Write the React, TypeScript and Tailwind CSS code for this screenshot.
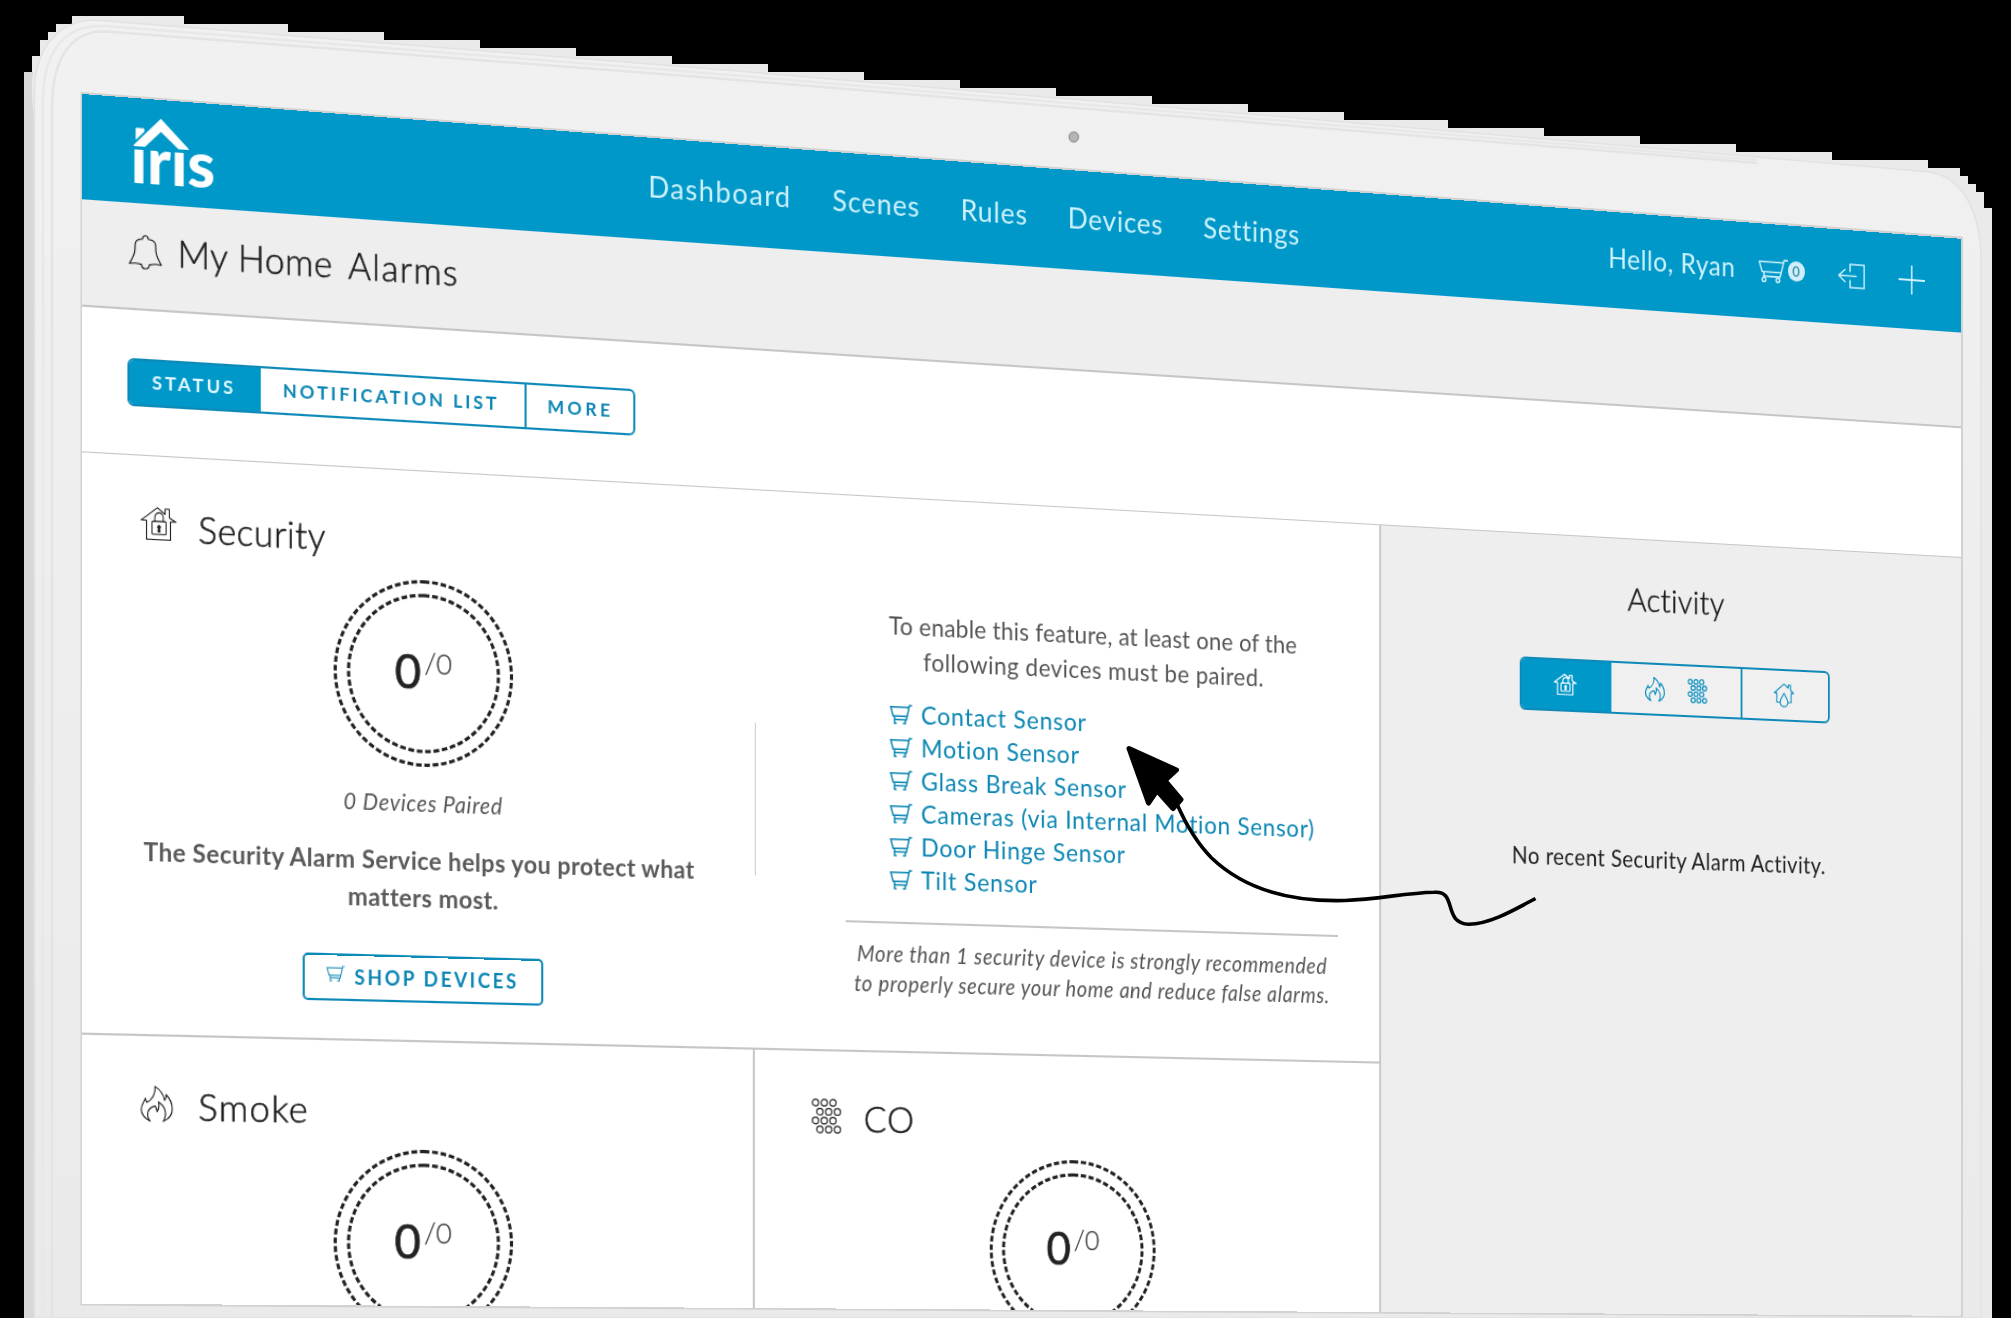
import React from "react";

const thin = {
  fill: "none",
  stroke: "currentColor",
  strokeLinecap: "round" as const,
  strokeLinejoin: "round" as const,
};

type IconProps = { className?: string; w?: number };

const HouseLock = ({ className, w = 1 }: IconProps) => (
  <svg viewBox="-0.5 -0.5 33 29" preserveAspectRatio="none" className={className} {...thin} strokeWidth={w}>
    <path d="M5 11.3H.2L15 .3l7 5.4V1.2h4v7.4l6 3.2h-5v15.7H5z" />
    <rect x="10" y="12" width="13" height="11" rx="1" />
    <path d="M12.6 12V8.5a3.9 3.9 0 0 1 7.8 0V12" />
    <path d="M16.5 15.4a1.3 1.3 0 0 1 .6 2.4l.3 3h-1.8l.3-3a1.3 1.3 0 0 1 .6-2.4z" fill="currentColor" />
  </svg>
);

const Flame = ({ className, w = 1.1 }: IconProps) => (
  <svg viewBox="-0.5 -0.2 30 32.6" className={className} {...thin} strokeWidth={w}>
    <path d="M8.2 31.7C3.4 29 0.2 25.2 0.2 21 0.2 17 2.6 14.6 4 11.2 4.2 12.6 4.4 14 5.4 14.8 10.4 12.4 13.6 6.6 12.8 0.5 17 3 20.6 8 21.6 12.8 22.8 11.200 23.200 9.600 22.900 7.600 26.400 10.800 28.600 16 28.600 20.800 28.600 25.200 25.400 29.400 20.400 31.700 24.200 25.400 22.600 18.400 16 14.400 16.900 17.400 16.200 20.600 14.700 23 14.400 21 14 19.400 12.900 18 9.800 18.800 6 21.200 6 25.800 6 28 7 30.200 8.200 31.700z" />
  </svg>
);

const Dots = ({ className, w = 1.2 }: IconProps) => (
  <svg viewBox="-0.5 -0.5 30 33" className={className} {...thin} strokeWidth={w}>
    {[3.5, 11.9, 20.2, 28.5].map((y, row) =>
      [3.5, 12.2, 20.9].map((x) => <circle key={`${x}-${y}`} cx={x + (row % 2 ? 4.4 : 0)} cy={y} r="3.1" />),
    )}
  </svg>
);

const HouseDrop = ({ className }: IconProps) => (
  <svg viewBox="-0.5 -0.5 23 24" className={className} {...thin} strokeWidth="1.2">
    <path d="M6.5 18.5H3V9.300H.3L11 .4l4.800 3.800V1.300h2.500v5l3.400 3H19v9.200h-3" />
    <path d="M11 9.600c1.600 3.400 4.400 5.600 4.400 8.900a4.400 4.400 0 0 1-8.800 0C6.600 15.200 9.400 13 11 9.600z" />
  </svg>
);

const Cart = ({ className, w = 1.6 }: IconProps) => (
  <svg viewBox="-0.5 -0.5 33 25" className={className} {...thin} strokeWidth={w}>
    <path d="M32 .6h-3.800L23.600 17.400H4.800M27.600 3H.4l3.200 10h21.200M5.600 13v4.400" />
    <circle cx="5.600" cy="20.800" r="2" />
    <circle cx="21.200" cy="20.800" r="2" />
  </svg>
);

const SmallCart = ({ className, w = 1.5 }: IconProps) => (
  <svg viewBox="-0.5 -0.5 23 19" className={className} {...thin} strokeLinecap="butt" strokeLinejoin="miter" strokeWidth={w}>
    <path d="M22 .5h-2.600L16.400 13.900H4.200M19.200 2.300H.6l2.400 8.500h14.200M4.400 10.800v6.600h2.200M15.200 13.900v3.500h-2.400" />
  </svg>
);

const Bell = () => (
  <svg viewBox="-0.5 -0.5 31 31" className="h-[31px] w-[31px]" {...thin} strokeWidth="1.100">
    <path d="M12.400 3.200c0-4 5.200-4 5.200 0 4 .3 6.800 1.500 6.800 5.300 0 6.500.3 9 5.200 17.300-3.200-.8-8.200-.4-11 .3-.2 4.900-6.900 4.900-7.200 0-2.800-.7-7.800-1.100-11-.3C5.300 17.500 5.600 15 5.600 8.500c0-3.800 2.800-5 6.800-5.300z" />
  </svg>
);

const Logo = () => (
  <div className="relative mb-[12px] ml-[45px] h-[80px] w-[80px]">
    <svg viewBox="44 0 80 80" className="absolute inset-0 h-[80px] w-[80px]" fill="#fff">
      <path
        d="M70.700 16.600 95.700 41.500H87.300L70.700 26.700 55.700 41.500H46.200z"
        stroke="#fff"
        strokeWidth="1.200"
        strokeLinejoin="round"
      />
      <path d="M48 26h7v2.500L48 35.500z" stroke="#fff" strokeWidth="1" strokeLinejoin="round" />
    </svg>
    <div className="absolute left-[-1px] top-[18px] text-[58px] font-black leading-[70px] text-white [clip-path:inset(27px_0_0_0)]">
      iris
    </div>
  </div>
);

const Gauge = () => (
  <div className="relative mx-auto h-[170px] w-[170px]">
    <svg viewBox="0 0 170 170" className="absolute inset-0" fill="none" stroke="#222" strokeWidth="3" strokeDasharray="5.400 2.600">
      <circle cx="85" cy="85" r="83.500" transform="rotate(-90 85 85)" />
      <circle cx="85" cy="85" r="71" transform="rotate(-90 85 85)" />
    </svg>
    <div className="flex h-[165px] items-center justify-center">
      <span className="text-[43px] leading-none text-[#222] [-webkit-text-stroke:0.7px_#222]">0</span>
      <span className="mb-[15px] ml-[3px] text-[26px] font-light leading-none text-[#444] [-webkit-text-stroke:0.3px_#444]">/0</span>
    </div>
  </div>
);

const PanelTitle = ({ icon, label, className }: { icon: React.ReactNode; label: string; className: string }) => (
  <div className="flex h-[40px] items-center">
    <div className="ml-[53px] flex w-[53px] text-[#222]">{icon}</div>
    <h2 className={"font-light leading-[40px] text-[#1c1c1c] [-webkit-text-stroke:0.5px_#1c1c1c] " + className}>{label}</h2>
  </div>
);

const sensors = [
  "Contact Sensor",
  "Motion Sensor",
  "Glass Break Sensor",
  "Cameras (via Internal Motion Sensor)",
  "Door Hinge Sensor",
  "Tilt Sensor",
];

const Header = () => (
  <header className="flex h-[94px] shrink-0 items-center bg-[#0097c9] text-[27px] leading-[40px] text-[#cdf2fb]">
    <div className="w-[532.500px]">
      <Logo />
    </div>
    <nav className="grid w-[992px] grid-cols-[181.300px_128.800px_108.900px_139.900px_1fr] pb-[5px]">
      <a className="tracking-[1.350px]">Dashboard</a>
      <a className="tracking-[0.900px]">Scenes</a>
      <a className="tracking-[0.900px]">Rules</a>
      <a className="tracking-[0.750px]">Devices</a>
      <a className="tracking-[0.780px]">Settings</a>
    </nav>
    <div className="flex items-center pb-[4px]">
      <span className="w-[166px] tracking-[0.600px]">Hello, Ryan</span>
      <Cart className="mt-[3px] h-[25px] w-[33px]" />
      <span className="flex h-[20px] w-[19px] items-center justify-center rounded-full bg-[#cdeff9] text-[14px] leading-none text-[#1b6f92]">
        0
      </span>
      <svg viewBox="-0.5 -0.5 31 25" className="ml-[37px] mt-[1px] h-[25px] w-[31px]" fill="none" stroke="currentColor" strokeWidth="1.600">
        <path d="M13.500 8V.5h16v23h-16V16M21 12H.6M8.200 5.500.8 12l7.400 6.500" />
      </svg>
      <svg viewBox="0 0 30 30" className="ml-[38.500px] h-[30px] w-[30px]" fill="none" stroke="currentColor" strokeWidth="1.800">
        <path d="M0 15h30M15 .5v29" />
      </svg>
    </div>
  </header>
);

const Security = () => (
  <section className="relative flex h-[520px] shrink-0 border-b-2 border-[#c6c6c6]">
    <div className="w-[636.500px] pt-[43px]">
      <PanelTitle
        icon={<HouseLock className="mb-[5px] h-[30.500px] w-[33px]" />}
        label="Security"
        className="text-[33px] tracking-[0.450px]"
      />
      <div className="mr-[3px] pt-[15.500px]">
        <Gauge />
        <p className="mt-[18.500px] text-center text-[20.500px] italic leading-[30px] tracking-[0.650px] text-[#555]">0 Devices Paired</p>
        <p className="mt-[20.500px] whitespace-nowrap text-center text-[22.500px] font-bold leading-[34px] tracking-[0.400px] text-[#5a5a5a]">
          The Security Alarm Service helps you protect what
          <br />
          matters most.
        </p>
        <button className="mx-auto mt-[35px] flex h-[43px] w-[228.500px] items-center rounded-[5px] border-2 border-[#0e8ab8] pl-[20px] text-[18px] font-bold tracking-[2.400px] text-[#0b86b3]">
          <SmallCart className="mb-[5px] h-[15px] w-[18px]" w={1.2} />
          <span className="ml-[9px] pb-[1px] leading-none">SHOP DEVICES</span>
        </button>
      </div>
    </div>
    <div className="mt-[216px] h-[142px] w-0 border-l-[1.500px] border-[#ccc]" />
    <div className="ml-[89.500px] w-[506px] pt-[103px]">
      <p className="text-center text-[23px] leading-[32.700px] text-[#555]">
        <span className="block tracking-[0.220px]">To enable this feature, at least one of the</span>
        <span className="block tracking-[0.480px]">following devices must be paired.</span>
      </p>
      <ul className="ml-[43.500px] mt-[18.500px] text-[23.500px] leading-[31.100px] tracking-[0.760px] text-[#0b86b3]">
        {sensors.map((s) => (
          <li key={s} className="flex h-[31.100px] items-center">
            <SmallCart className="h-[19px] w-[23px]" />
            <a className="ml-[9px] whitespace-nowrap">{s}</a>
          </li>
        ))}
      </ul>
      <div className="mt-[23.500px] h-[2px] bg-[#c6c6c6]" />
      <p className="mt-[15px] whitespace-nowrap text-center text-[20.500px] italic leading-[27.800px] tracking-[0.640px] text-[#555]">
        More than 1 security device is strongly recommended
        <br />
        to properly secure your home and reduce false alarms.
      </p>
    </div>
  </section>
);

const Sidebar = () => (
  <aside className="flex flex-1 flex-col items-center border-l-2 border-[#c6c6c6] bg-[#eeeeee] pt-[38px]">
    <h2 className="text-[32px] font-light leading-[40px] tracking-[0.470px] text-[#1c1c1c] [-webkit-text-stroke:0.500px_#1c1c1c]">Activity</h2>
    <div className="mt-[42px] flex h-[51.500px] w-[342.300px] items-stretch overflow-hidden rounded-[6px] border-2 border-[#0e8ab8] bg-[#f0f0f0] text-[#0b8fbf]">
      <div className="flex w-[98px] items-center justify-center bg-[#0097c9] pr-[3px] text-white">
        <HouseLock className="h-[21px] w-[25px]" w={1.6} />
      </div>
      <div className="flex w-[143px] items-center justify-center gap-[25px]">
        <Flame className="h-[24px] w-[22px]" w={1.7} />
        <Dots className="h-[24px] w-[22px]" w={1.8} />
      </div>
      <div className="flex flex-1 items-center justify-center border-l-2 border-[#0e8ab8] pr-[3px]">
        <HouseDrop className="h-[24px] w-[23px]" />
      </div>
    </div>
    <p className="mr-[13px] mt-[127px] text-[22.500px] leading-[30px] tracking-[0.430px] text-[#222]">No recent Security Alarm Activity.</p>
  </aside>
);

const Screen = () => (
  <div className="absolute left-0 top-0 flex h-[1080px] w-[1920px] origin-top-left flex-col overflow-hidden bg-white [transform:matrix3d(1.1039,0.09073,0,0.000064115,0,1.12,0,0,0,0,1,0,82.5,94,0,1)]">
    <Header />
    <div className="flex h-[96px] shrink-0 items-center border-b-2 border-[#c6c6c6] bg-[#eeeeee] pb-[11px] pl-[42px] text-[#1c1c1c]">
      <div className="mt-[3px]">
        <Bell />
      </div>
      <h1 className="ml-[14px] flex text-[33px] font-light leading-[40px] [-webkit-text-stroke:0.500px_#1c1c1c]">
        <span className="w-[158.500px] tracking-[0.500px]">My Home</span>
        <span className="tracking-[1.300px]">Alarms</span>
      </h1>
    </div>
    <div className="h-[130px] shrink-0 border-b-[1.500px] border-[#c6c6c6] pl-[41px] pt-[43px]">
      <div className="flex h-[43px] w-[478.500px] overflow-hidden rounded-[6px] border-2 border-[#0e8ab8] text-[17px] font-bold leading-[37px] tracking-[2.750px] text-[#0b86b3]">
        <div className="w-[121px] bg-[#0097c9] pl-[20.500px] text-[#dff7ff]">STATUS</div>
        <div className="w-[249px] pl-[20.500px]">NOTIFICATION LIST</div>
        <div className="flex-1 border-l-2 border-[#0e8ab8] pl-[20px] tracking-[3.300px]">MORE</div>
      </div>
    </div>
    <div className="flex flex-1">
      <main className="flex w-[1277px] flex-col">
        <Security />
        <div className="flex h-[240px] overflow-hidden">
          <section className="w-[637px] border-r-2 border-[#c6c6c6] pt-[41.500px]">
            <PanelTitle icon={<Flame className="mb-[3px] h-[33px] w-[30px]" />} label="Smoke" className="text-[34px] tracking-[1.200px]" />
            <div className="mr-[2px] pt-[16.500px]">
              <Gauge />
            </div>
          </section>
          <section className="flex-1 pt-[41.500px]">
            <PanelTitle
              icon={<Dots className="mb-[3px] ml-[2.500px] h-[33px] w-[30px]" />}
              label="CO"
              className="ml-[2px] text-[34px] tracking-[0.900px]"
            />
            <div className="h-[16.500px]" />
            <Gauge />
          </section>
        </div>
      </main>
      <Sidebar />
    </div>
  </div>
);

const Device = () => (
  <svg viewBox="0 0 2011 1318" className="absolute inset-0 h-[1318px] w-[2011px]" fill="none">
    <defs>
      <linearGradient id="body" x1="0" y1="0" x2="0" y2="1">
        <stop offset="0" stopColor="#f1f1f1" />
        <stop offset="1" stopColor="#eaeaea" />
      </linearGradient>
    </defs>
    <path
      d="M72 16H184V24H288V32H384V40H480V48H576V56H672V64H768V72H864V80H960V88H1056V96H1152V104H1248V112H1344V120H1448V128H1544V136H1640V144H1736V152H1832V160H1928V168H1960V176H1968V184H1976V192H1984V208H1992V1318H24V72H32V56H40V40H48V32H56V24H72z"
      fill="#eaeaea"
    />
    <path d="M24 72H33Q30 90 34.500 120V1318H24z" fill="#d8d8d8" />
    <path
      d="M34.500 1318V92C34.500 50 58 17 100 20.500L700 68 1320 120 1757 157 1930 172C1965 178 1981 215 1981 262V1318z"
      fill="url(#body)"
      stroke="#e2e2e2"
      strokeWidth="1.500"
    />
    <path d="M43 1318V100C43 58 60 24 104 26L700 72.500 1320 124 1757 160" stroke="#e8e8e8" strokeWidth="2.500" />
    <path d="M52 1318V108C52 66 66 30 106 31.500L700 77 1320 128 1757 163" stroke="#e4e4e4" strokeWidth="2.500" />
    <path d="M82.500 94 1961 238.700V1315.300L82.500 1303.600z" stroke="#d2d2d2" strokeWidth="4" />
    <ellipse cx="1073.800" cy="137" rx="6" ry="6.300" fill="#dcdcdc" />
    <ellipse cx="1073.800" cy="137" rx="4.600" ry="5" fill="#b4b4b4" stroke="#8f8f8f" strokeWidth="1" />
  </svg>
);

const Pointer = () => (
  <svg viewBox="0 0 2011 1318" className="pointer-events-none absolute inset-0 h-[1318px] w-[2011px]" fill="none" stroke="#000" strokeLinejoin="round">
    <path d="M1129 748.500 1176.500 770 1165 780.500 1181 799.500 1173 808.500 1157 790.500 1148.500 803z" fill="#000" strokeWidth="5" />
    <path
      d="M1177 804C1184 820 1196 842 1211.400 857.700 1245 890 1290 902 1345 900.500 1380 899 1405 893 1434 892.300 1458 890 1442 923 1468.800 924.300 1490 924 1514 910 1535.500 898.500"
      strokeWidth="3.600"
    />
  </svg>
);

export default function App() {
  return (
    <div className="relative h-[1318px] w-[2011px] overflow-hidden bg-black font-[Lato,sans-serif]">
      <Device />
      <Screen />
      <Pointer />
    </div>
  );
}
